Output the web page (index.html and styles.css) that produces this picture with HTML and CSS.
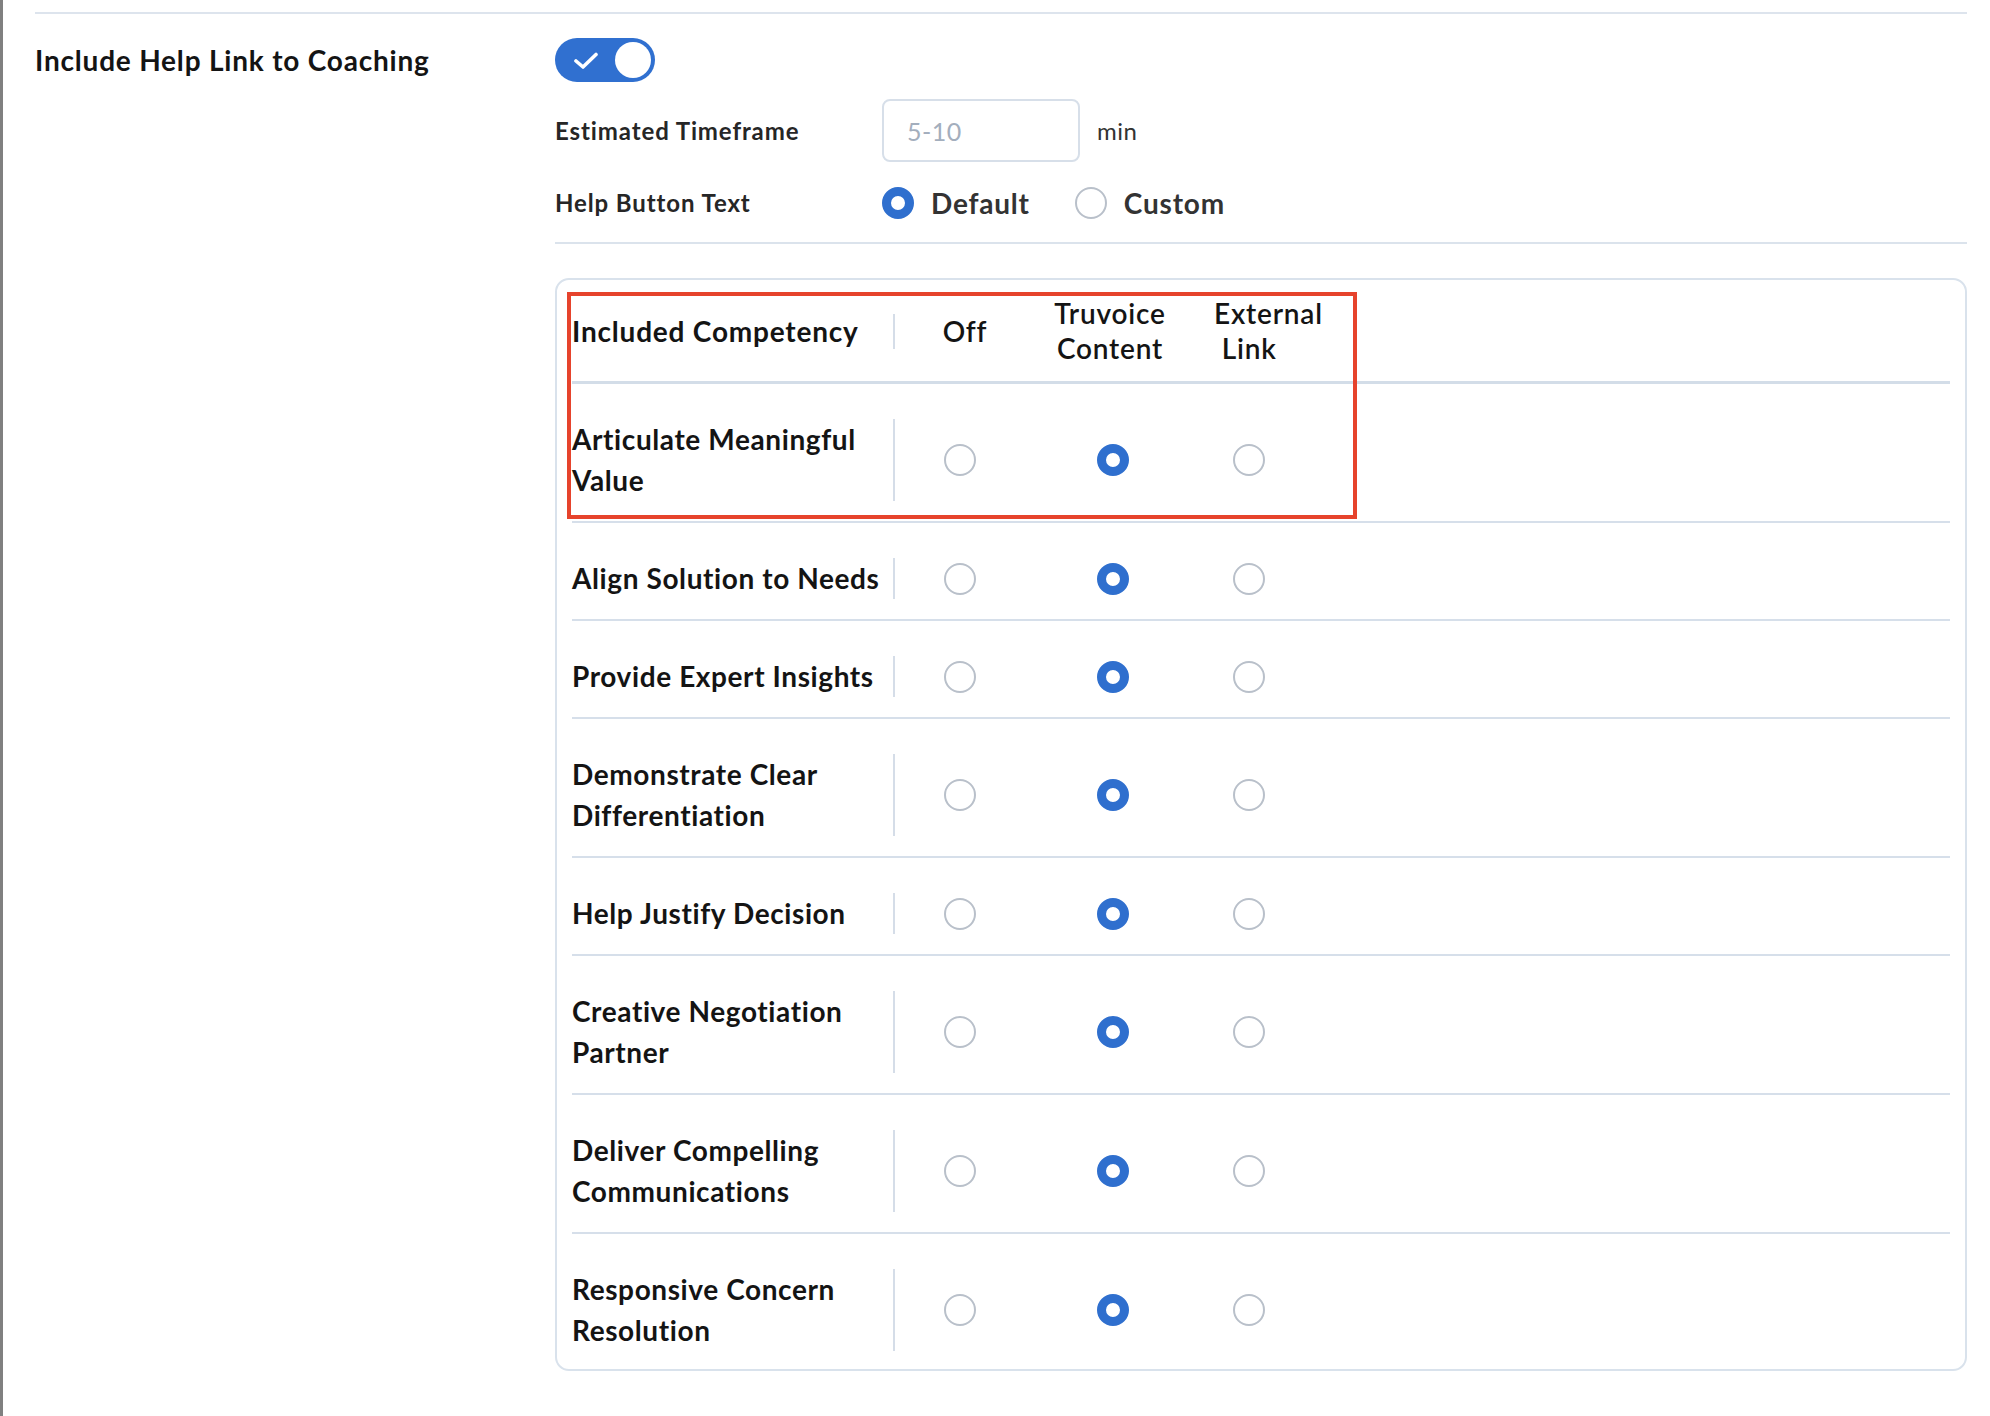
FILE: index.html
```html
<!DOCTYPE html>
<html lang="en">
<head>
    <meta charset="UTF-8">
    <meta name="viewport" content="width=device-width, initial-scale=1.0">
    <title>Help Link to Coaching</title>
    <link rel="stylesheet" href="styles.css">
</head>
<body>
    <div class="page">
        <section class="setting">
            <div class="setting-label">Include Help Link to Coaching</div>

            <div class="setting-body">
                <div class="toggle on">
                    <svg class="toggle-check" width="24" height="18" viewBox="0 0 24 18">
                        <polyline points="2,10 9,16 22,3.5" fill="none" stroke="#fff" stroke-width="3.6" stroke-linecap="round" stroke-linejoin="round"/>
                    </svg>
                    <span class="toggle-knob"></span>
                </div>

                <div class="form-row">
                    <label class="form-label" for="timeframe">Estimated Timeframe</label>
                    <input type="text" id="timeframe" class="text-input" placeholder="5-10">
                    <span class="unit">min</span>
                </div>

                <div class="form-row">
                    <span class="form-label">Help Button Text</span>
                    <label class="choice"><span class="radio checked"></span>Default</label>
                    <label class="choice choice-next"><span class="radio"></span>Custom</label>
                </div>

                <div class="divider"></div>

                <div class="card">
                    <div class="highlight"></div>

                    <div class="grid-row head">
                        <div class="name-cell">Included Competency</div>
                        <div class="col-head col-head-off">Off</div>
                        <div class="col-head">Truvoice<br>Content</div>
                        <div class="col-head col-head-left">External<br>&nbsp;Link</div>
                    </div>

                    <div class="grid-row">
                        <div class="name-cell">Articulate Meaningful Value</div>
                        <div class="cell"><span class="radio"></span></div>
                        <div class="cell"><span class="radio checked"></span></div>
                        <div class="cell"><span class="radio"></span></div>
                    </div>

                    <div class="grid-row">
                        <div class="name-cell">Align Solution to Needs</div>
                        <div class="cell"><span class="radio"></span></div>
                        <div class="cell"><span class="radio checked"></span></div>
                        <div class="cell"><span class="radio"></span></div>
                    </div>

                    <div class="grid-row">
                        <div class="name-cell">Provide Expert Insights</div>
                        <div class="cell"><span class="radio"></span></div>
                        <div class="cell"><span class="radio checked"></span></div>
                        <div class="cell"><span class="radio"></span></div>
                    </div>

                    <div class="grid-row">
                        <div class="name-cell">Demonstrate Clear Differentiation</div>
                        <div class="cell"><span class="radio"></span></div>
                        <div class="cell"><span class="radio checked"></span></div>
                        <div class="cell"><span class="radio"></span></div>
                    </div>

                    <div class="grid-row">
                        <div class="name-cell">Help Justify Decision</div>
                        <div class="cell"><span class="radio"></span></div>
                        <div class="cell"><span class="radio checked"></span></div>
                        <div class="cell"><span class="radio"></span></div>
                    </div>

                    <div class="grid-row">
                        <div class="name-cell">Creative Negotiation Partner</div>
                        <div class="cell"><span class="radio"></span></div>
                        <div class="cell"><span class="radio checked"></span></div>
                        <div class="cell"><span class="radio"></span></div>
                    </div>

                    <div class="grid-row">
                        <div class="name-cell">Deliver Compelling Communications</div>
                        <div class="cell"><span class="radio"></span></div>
                        <div class="cell"><span class="radio checked"></span></div>
                        <div class="cell"><span class="radio"></span></div>
                    </div>

                    <div class="grid-row">
                        <div class="name-cell">Responsive Concern Resolution</div>
                        <div class="cell"><span class="radio"></span></div>
                        <div class="cell"><span class="radio checked"></span></div>
                        <div class="cell"><span class="radio"></span></div>
                    </div>
                </div>
            </div>
        </section>
    </div>
</body>
</html>
```

FILE: styles.css
```css
* {
    margin: 0;
    padding: 0;
    box-sizing: border-box;
}

body {
    font-family: 'Lato', 'Noto Sans', sans-serif;
    background: white;
    color: #141414;
}

.page {
    min-height: 100vh;
    border-left: 3px solid #808080;
    padding: 12px 23px 0 32px;
}

.setting {
    display: flex;
    border-top: 2px solid #dde4ed;
    padding-top: 24px;
}

.setting-label {
    width: 520px;
    flex-shrink: 0;
    font-size: 28px;
    font-weight: 700;
    letter-spacing: 0.8px;
    line-height: 44px;
}

.setting-body {
    flex: 1;
}

/* toggle */
.toggle {
    position: relative;
    width: 100px;
    height: 44px;
    border-radius: 22px;
    background: #3070d0;
    display: flex;
    align-items: center;
    justify-content: space-between;
    padding: 0 4px 0 19px;
}

.toggle-knob {
    width: 36px;
    height: 36px;
    border-radius: 50%;
    background: white;
}

/* form rows */
.form-row {
    display: flex;
    align-items: center;
    height: 63px;
    margin-top: 9px;
}

.toggle + .form-row {
    margin-top: 17px;
}

.form-label {
    width: 327px;
    flex-shrink: 0;
    font-size: 24px;
    font-weight: 700;
    letter-spacing: 0.9px;
    color: #262626;
}

.text-input {
    width: 198px;
    height: 63px;
    border: 2px solid #d7dfe9;
    border-radius: 8px;
    padding: 0 23px;
    font-family: inherit;
    font-size: 25px;
    letter-spacing: 0.5px;
    color: #333;
}

.text-input::placeholder {
    color: #a3aebd;
}

.unit {
    margin-left: 17px;
    font-size: 24px;
    letter-spacing: 0.5px;
    color: #333;
}

.choice {
    display: flex;
    align-items: center;
    gap: 17px;
    font-size: 28px;
    font-weight: 700;
    letter-spacing: 0.8px;
    color: #333;
}

.choice-next {
    margin-left: 45px;
}

.radio {
    display: inline-block;
    width: 32px;
    height: 32px;
    border-radius: 50%;
    border: 2px solid #b9c0ca;
    background: white;
}

.radio.checked {
    border: 9px solid #2f6fce;
}

.divider {
    height: 2px;
    background: #dbe3ec;
    margin-top: 8px;
}

/* competency table */
.card {
    position: relative;
    margin-top: 34px;
    border: 2px solid #d9e2ec;
    border-radius: 14px;
    padding: 0 15px;
}

.highlight {
    position: absolute;
    left: 10px;
    top: 12px;
    width: 790px;
    height: 227px;
    border: 4px solid #e6432c;
    pointer-events: none;
}

.grid-row {
    display: grid;
    grid-template-columns: 323px 124px 182px 90px;
    align-items: center;
    padding: 35px 0 20px;
    border-bottom: 2px solid #d6dfea;
    font-size: 28px;
    font-weight: 700;
    letter-spacing: 0.6px;
    line-height: 41px;
}

.grid-row:last-child {
    border-bottom: none;
    padding-bottom: 18px;
}

.grid-row.head {
    padding: 16px 0 15px;
    border-bottom: 3px solid #d3dde8;
    letter-spacing: 0.8px;
    line-height: 35px;
}

.name-cell {
    border-right: 2px solid #d5dde8;
}

.cell {
    display: flex;
    justify-content: center;
    padding-left: 6px;
}

.col-head {
    text-align: center;
    font-weight: 600;
}

.col-head-off {
    padding-left: 16px;
}

.col-head-left {
    text-align: left;
    padding-left: 13px;
    white-space: nowrap;
}
```
